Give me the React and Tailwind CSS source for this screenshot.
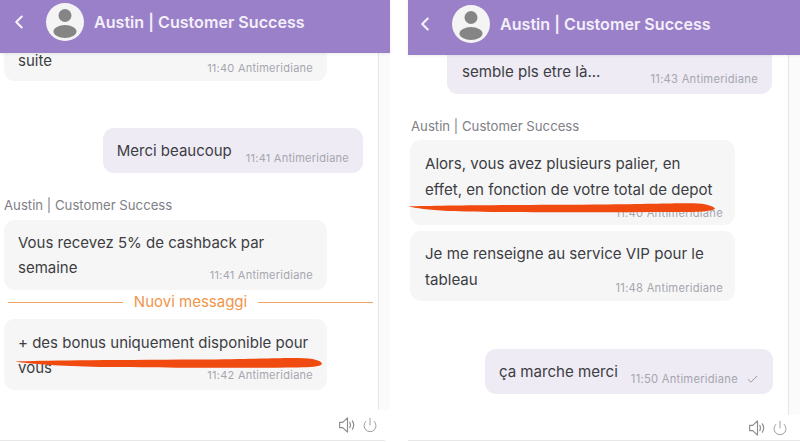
import { ChevronLeft, Power, Check } from 'lucide-react';

function Avatar() {
  return (
    <svg viewBox="0 0 38 38" className="w-[38px] h-[38px] shrink-0">
      <circle cx="19" cy="19" r="19" fill="#f4f4f4" />
      <circle cx="19" cy="12.5" r="6.5" fill="#858585" />
      <ellipse cx="19" cy="28.5" rx="11.5" ry="6.5" fill="#858585" />
    </svg>
  );
}

function SpeakerIcon() {
  return (
    <svg viewBox="0 0 16 15" className="w-[17px] h-[16px]" fill="none" stroke="currentColor" strokeWidth="1.1" strokeLinejoin="round" strokeLinecap="round">
      <path d="M0.6 5 H3.5 L8 0.8 V14.2 L3.5 10 H0.6 Z" />
      <path d="M10.2 5 Q11.6 7.5 10.2 10" />
      <path d="M12.6 3.6 Q15 7.5 12.6 11.4" />
    </svg>
  );
}

function Header({ className }) {
  return (
    <div className={`bg-[#9a80c8] flex items-center shrink-0 shadow-[0_1px_3px_rgba(0,0,0,0.08)] z-10 ${className}`}>
      <ChevronLeft size={22} strokeWidth={2.25} className="text-[#f5f2fa]" />
      <div className="ml-[16px]">
        <Avatar />
      </div>
      <span className="ml-[10px] text-[16.1px] font-semibold text-[#f3eff9]">Austin | Customer Success</span>
    </div>
  );
}

function Time({ children, check, big }) {
  return (
    <span className={`flex items-center shrink-0 leading-[14px] text-[#a6a6ae] mb-[-2px] tracking-[0.25px] ${big ? 'text-[11.2px]' : 'text-[11px]'}`}>
      {children}
      {check && <Check size={13} strokeWidth={1.5} className="ml-[8px] text-[#85858d]" />}
    </span>
  );
}

// Incoming bubble, lines are split the way the screenshot wraps them
function Incoming({ lines, last, time, big, className = '' }) {
  return (
    <div className={`w-[323px] bg-[#f6f6f7] rounded-[11px] py-[10px] text-[#3d3d42] ${big ? 'pl-[15px] pr-[12px] text-[15.1px] leading-[26px]' : 'px-[14px] text-[15px] leading-[25px]'} ${className}`}>
      {lines.map((l) => (
        <div key={l}>{l}</div>
      ))}
      <div className={`flex justify-between items-end ${last ? '' : 'h-[15px]'}`}>
        <span>{last}</span>
        <Time big={big}>{time}</Time>
      </div>
    </div>
  );
}

function Outgoing({ text, time, check, big, className = '' }) {
  return (
    <div className={`self-end bg-[#eeebf5] rounded-[11px] px-[14px] py-[10px] leading-[25px] text-[#3d3d42] flex items-end justify-between ${big ? 'text-[15.1px] gap-[13px]' : 'text-[15px] gap-[14px]'} ${className}`}>
      <span>{text}</span>
      <Time check={check} big={big}>{time}</Time>
    </div>
  );
}

function SenderName({ className }) {
  return <div className={`text-[13.2px] leading-[16px] text-[#808086] ${className}`}>Austin | Customer Success</div>;
}

function Footer({ className }) {
  return (
    <div className={`flex items-center justify-end gap-[6px] text-[#8c8c8c] border-b border-[#e8e8e8] shrink-0 ${className}`}>
      <SpeakerIcon />
      <Power size={16} strokeWidth={1.25} />
    </div>
  );
}

function Divider() {
  return (
    <div className="flex items-center h-[20px] mt-[2px] -mr-[10px] ml-[4px] text-[15px] text-[#f0954a]">
      <div className="flex-1 h-px bg-[#f0a565]" />
      <span className="mx-[11px]">Nuovi messaggi</span>
      <div className="flex-1 h-px bg-[#f0a565]" />
    </div>
  );
}

function LeftChat() {
  return (
    <div className="relative w-[390px] h-[441px] flex flex-col">
      <Header className="h-[53px] pl-[8px] pb-[9px]" />
      <div className="flex-1 min-h-0 flex bg-[#fbfbfb]">
        <div className="w-[379px] bg-white border-r border-[#e6e6e8] overflow-hidden flex flex-col justify-end pl-[4px] pr-[15px] pb-[20px]">
          <Incoming className="pt-[40px] pb-[8px]" lines={[]} last="suite" time="11:40 Antimeridiane" />
          <Outgoing className="mt-[47px]" text="Merci beaucoup" time="11:41 Antimeridiane" />
          <SenderName className="mt-[24px]" />
          <Incoming className="mt-[7px]" lines={['Vous recevez 5% de cashback par']} last="semaine" time="11:41 Antimeridiane" />
          <Divider />
          <Incoming className="mt-[7px] pt-[11px]" lines={['+ des bonus uniquement disponible pour']} last="vous" time="11:42 Antimeridiane" />
        </div>
      </div>
      <Footer className="h-[31px] w-[385px] pr-[7px]" />
      {/* marker stroke drawn over the screenshot */}
      <svg className="absolute inset-0 w-full h-full pointer-events-none" viewBox="0 0 390 441">
        <path d="M15 361.5 C40 360.5 100 360 200 359.5 C250 359 280 358 298 358 C314 358 322 361 322 364 C320 367 310 367 298 367.5 C250 368 200 368 100 367 C60 366 30 364 15 361.5Z" fill="#f04a10" />
      </svg>
    </div>
  );
}

function RightChat() {
  return (
    <div className="relative w-[392px] h-[441px] ml-[18px] flex flex-col">
      <Header className="h-[55px] pl-[6px] pb-[7px]" />
      <div className="flex-1 min-h-0 flex bg-[#fbfbfb]">
        <div className="w-[381px] bg-white border-r border-[#e6e6e8] overflow-hidden flex flex-col justify-end pl-[2px] pr-[15px] pb-[21px]">
          <Outgoing big className="w-[325px] mr-[1px] pl-[15px] pt-[40px]" text="semble pls etre là..." time="11:43 Antimeridiane" />
          <SenderName className="mt-[24px] ml-[1px]" />
          <Incoming big className="mt-[6px] w-[325px] pt-[11px] pb-[7px]" lines={['Alors, vous avez plusieurs palier, en', 'effet, en fonction de votre total de depot']} time="11:40 Antimeridiane" />
          <Incoming big className="mt-[6px] w-[325px] pb-[8px]" lines={['Je me renseigne au service VIP pour le']} last="tableau" time="11:48 Antimeridiane" />
          <Outgoing big className="mt-[48px]" text="ça marche merci" time="11:50 Antimeridiane" check />
        </div>
      </div>
      <Footer className="h-[26px] pr-[12px]" />
      <svg className="absolute inset-0 w-full h-full pointer-events-none" viewBox="0 0 392 441">
        <path d="M0 206.5 C30 205.5 100 205 200 204.5 C250 204 275 203 290 203.5 C300 204 307 207 307 209 C303 211.5 290 212 270 212 C180 212.5 80 212.5 40 211 C20 210 8 208 0 206.5Z" fill="#f04a10" />
      </svg>
    </div>
  );
}

export default function App() {
  return (
    <div className="w-[800px] h-[442px] bg-white flex overflow-hidden font-['Inter',sans-serif]">
      <LeftChat />
      <RightChat />
    </div>
  );
}
